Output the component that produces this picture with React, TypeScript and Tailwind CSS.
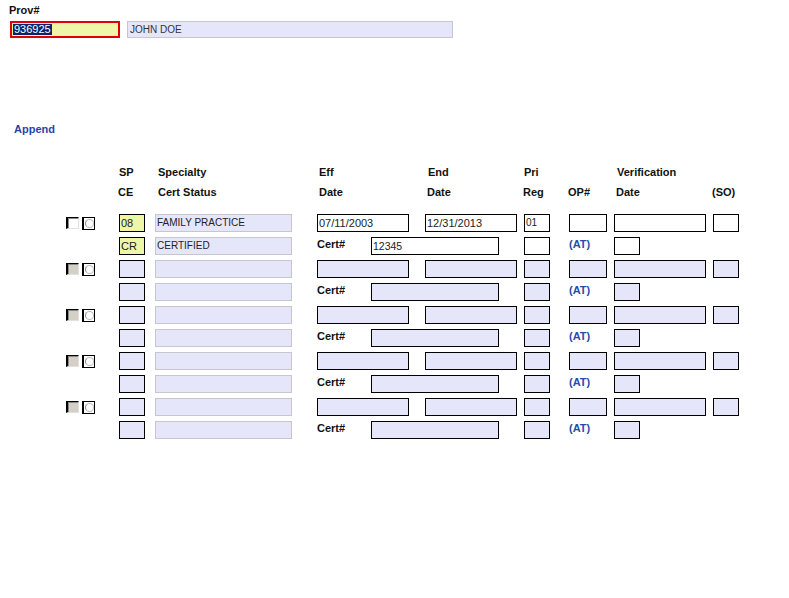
import React from "react";

type Kind = "white" | "yellow" | "lav" | "lavB";

const kindClass: Record<Kind, string> = {
  white: "bg-white border border-black",
  yellow: "bg-[#eef7a8] border border-black",
  lav: "bg-[#e6e6fa] border border-[#c6c6cc]",
  lavB: "bg-[#e6e6fa] border border-black",
};

function Box({ w, v, kind, size = "text-[11px]" }: { w: string; v?: string; kind: Kind; size?: string }) {
  return (
    <div className={`${w} h-[18px] shrink-0 flex items-center pl-[1px] ${size} text-[#222] leading-none ${kindClass[kind]}`}>
      {v}
    </div>
  );
}

function Icons({ active }: { active: boolean }) {
  return (
    <div className="w-[54px] shrink-0 flex items-center h-[18px] pl-[1px]">
      <span
        className={`w-[13px] h-[12px] border-l-2 border-t border-black border-r border-b border-r-[#e0e0e0] border-b-[#e0e0e0] ${
          active ? "bg-white" : "bg-[#d4d0c8]"
        } shadow-[inset_1px_1px_0_#8a8a8a]`}
      />
      <span className="ml-[3px] w-[13px] h-[13px] border border-black border-l-2 bg-white flex items-center justify-center">
        <span className="w-[9px] h-[9px] rounded-full border border-[#bdbdbd] border-l-[#8a8a8a]" />
      </span>
    </div>
  );
}

type Data = { sp?: string; spec?: string; eff?: string; end?: string; pri?: string; ce?: string; status?: string; cert?: string };

function Group({ d, filled }: { d: Data; filled: boolean }) {
  const k: Kind = filled ? "white" : "lavB";
  const y: Kind = filled ? "yellow" : "lavB";
  return (
    <div className="flex flex-col gap-[5px]">
      <div className="flex items-center">
        <Icons active={filled} />
        <Box w="w-[26px]" v={d.sp} kind={y} />
        <Box w="w-[137px] ml-[10px]" v={d.spec} kind="lav" size="text-[10px]" />
        <Box w="w-[92px] ml-[25px]" v={d.eff} kind={k} />
        <Box w="w-[92px] ml-[16px]" v={d.end} kind={k} />
        <Box w="w-[26px] ml-[7px]" v={d.pri} kind={k} size="text-[10px]" />
        <Box w="w-[38px] ml-[19px]" kind={k} />
        <Box w="w-[92px] ml-[7px]" kind={k} />
        <Box w="w-[26px] ml-[7px]" kind={k} />
      </div>
      <div className="flex items-center">
        <div className="w-[54px] shrink-0" />
        <Box w="w-[26px]" v={d.ce} kind={y} />
        <Box w="w-[137px] ml-[10px]" v={d.status} kind="lav" size="text-[10px]" />
        <div className="w-[54px] ml-[25px] shrink-0 text-[11px] font-bold text-[#111] -mt-[3px]">Cert#</div>
        <Box w="w-[128px]" v={d.cert} kind={k} size="text-[10.5px]" />
        <Box w="w-[26px] ml-[25px]" kind={k} />
        <div className="w-[45px] ml-[19px] shrink-0 text-[11px] font-bold text-[#2a4aa8] -mt-[3px]">(AT)</div>
        <Box w="w-[26px]" kind={k} />
      </div>
    </div>
  );
}

const groups: Data[] = [
  { sp: "08", spec: "FAMILY PRACTICE", eff: "07/11/2003", end: "12/31/2013", pri: "01", ce: "CR", status: "CERTIFIED", cert: "12345" },
  {},
  {},
  {},
  {},
];

export default function App() {
  return (
    <div className="w-[789px] h-[598px] bg-white font-['Liberation_Sans',Arial,sans-serif] text-[#111] relative">
      {/* Provider */}
      <div className="pt-[4px] pl-[9px]">
        <div className="text-[11px] font-bold h-[13px] leading-[13px]">Prov#</div>
        <div className="flex items-center mt-[4px] pl-[1px]">
          <div className="w-[110px] h-[17px] border-2 border-[#e00000] bg-[#eef7a8] flex items-center pl-[1px]">
            <span className="bg-[#0a246a] text-white text-[11px] leading-[11px] px-[1px]">936925</span>
          </div>
          <div className="w-[326px] h-[17px] ml-[7px] border border-[#c6c6cc] bg-[#e6e6fa] flex items-center pl-[2px] text-[10px] text-[#333]">
            JOHN DOE
          </div>
        </div>
      </div>

      <div className="mt-[84px] pl-[14px] text-[11px] font-bold text-[#1f45a5] h-[14px] leading-[14px]">Append</div>

      {/* Headers */}
      <div className="mt-[26px] pl-[65px] text-[11px] font-bold text-[#111]">
        <div className="flex items-center h-[20px]">
          <div className="w-[54px] shrink-0" />
          <div className="w-[39px] shrink-0">SP</div>
          <div className="w-[161px] shrink-0">Specialty</div>
          <div className="w-[108px] shrink-0">Eff</div>
          <div className="w-[97px] shrink-0 pl-[1px]">End</div>
          <div className="w-[90px] shrink-0">Pri</div>
          <div className="w-[99px] shrink-0 pl-[3px]">Verification</div>
        </div>
        <div className="flex items-center h-[20px]">
          <div className="w-[54px] shrink-0" />
          <div className="w-[39px] shrink-0 -ml-[1px] pl-[0px]">CE</div>
          <div className="w-[161px] shrink-0 pl-[1px]">Cert Status</div>
          <div className="w-[108px] shrink-0 pl-[1px]">Date</div>
          <div className="w-[97px] shrink-0 pl-[1px]">Date</div>
          <div className="w-[45px] shrink-0">Reg</div>
          <div className="w-[45px] shrink-0">OP#</div>
          <div className="w-[99px] shrink-0 pl-[3px]">Date</div>
          <div className="shrink-0">(SO)</div>
        </div>
      </div>

      {/* Rows */}
      <div className="mt-[12px] pl-[65px] flex flex-col gap-[5px]">
        {groups.map((g, i) => (
          <Group key={i} d={g} filled={i === 0} />
        ))}
      </div>
    </div>
  );
}
